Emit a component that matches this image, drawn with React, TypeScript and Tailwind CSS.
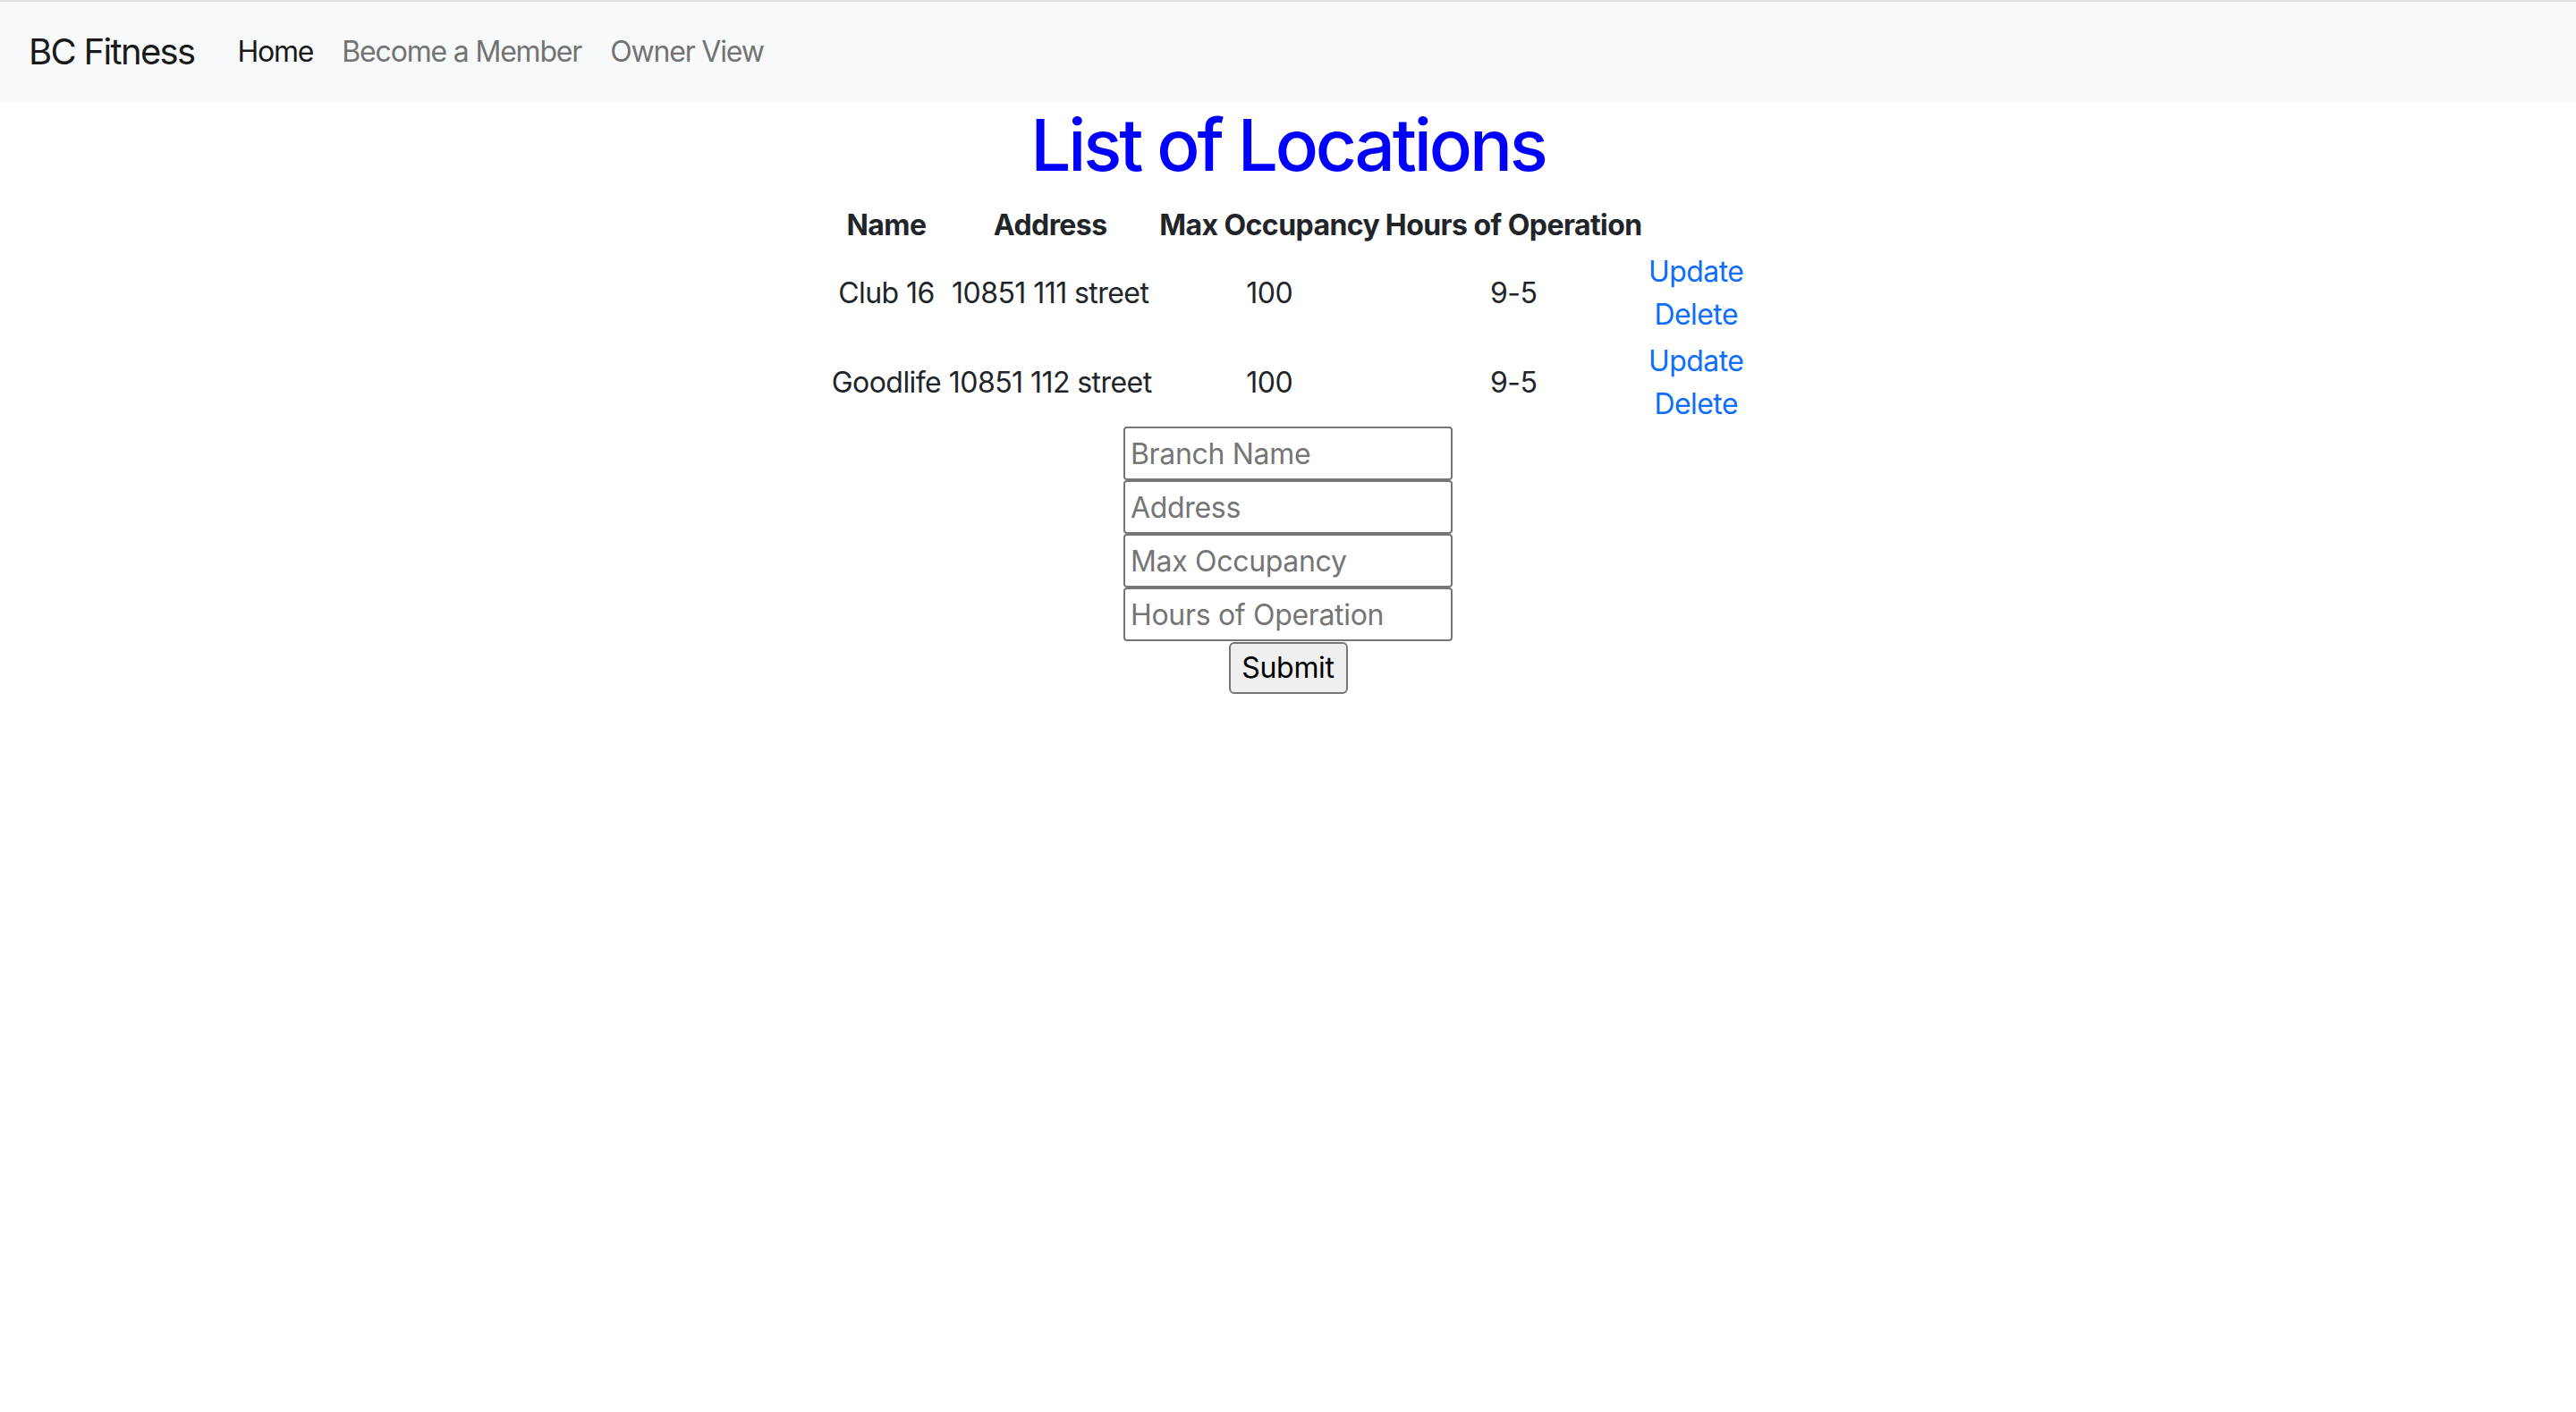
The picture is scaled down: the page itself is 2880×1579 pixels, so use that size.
const locations = [
  { name: "Club 16", address: "10851 111 street", max: "100", hours: "9-5" },
  { name: "Goodlife", address: "10851 112 street", max: "100", hours: "9-5" },
];

const fields = ["Branch Name", "Address", "Max Occupancy", "Hours of Operation"];

function NavBar() {
  return (
    <nav className="flex h-[113px] items-center border-t-2 border-[#dfe1e5] bg-[#f8f9fa] pl-[32px]">
      <a className="mr-[32px] text-[40px] leading-[60px] tracking-[-0.042em] text-[#1a1a1a]">BC Fitness</a>
      <ul className="flex text-[32px] leading-[48px] tracking-[-0.037em]">
        <li className="px-[16px] text-[#1a1a1a]">Home</li>
        <li className="px-[16px] text-[#737373]">Become a Member</li>
        <li className="px-[16px] text-[#737373]">Owner View</li>
      </ul>
    </nav>
  );
}

export default function App() {
  return (
    <div className="min-h-screen bg-white font-['Inter','Liberation_Sans',sans-serif] tracking-[-0.035em] text-[#212529]">
      <NavBar />
      <main className="pt-[1px] text-center">
        <h1 className="mb-[16px] text-[80px] font-medium leading-[96px] tracking-[-0.04em] text-[#0000ff]">
          List of Locations
        </h1>

        <table className="mx-auto border-collapse whitespace-nowrap text-[32px] leading-[48px]">
          <thead>
            <tr>
              <th className="w-[124px] p-[2px] font-bold">Name</th>
              <th className="w-[240px] p-[2px] font-bold">Address</th>
              <th className="w-[250px] p-[2px] font-bold">Max Occupancy</th>
              <th className="w-[296px] p-[2px] font-bold">Hours of Operation</th>
              <th className="w-[112px] p-[2px]"></th>
            </tr>
          </thead>
          <tbody>
            {locations.map((l) => (
              <tr key={l.name}>
                <td className="p-[2px] align-middle">{l.name}</td>
                <td className="p-[2px] align-middle">{l.address}</td>
                <td className="p-[2px] align-middle">{l.max}</td>
                <td className="p-[2px] align-middle">{l.hours}</td>
                <td className="p-[2px] align-middle text-[#0d6efd]">
                  <div>Update</div>
                  <div>Delete</div>
                </td>
              </tr>
            ))}
          </tbody>
        </table>

        <form className="-mt-[1px] flex flex-col items-center">
          {fields.map((f) => (
            <input
              key={f}
              placeholder={f}
              className="block h-[60px] w-[368px] rounded-[4px] border-2 border-[#767676] bg-white px-[6px] text-[32px] tracking-[-0.01em] text-black placeholder:text-[#757575]"
            />
          ))}
          <button
            type="button"
            className="mt-[1px] h-[58px] w-[133px] rounded-[6px] border-2 border-[#767676] bg-[#efefef] text-[32px] tracking-[-0.01em] text-black"
          >
            Submit
          </button>
        </form>
      </main>
    </div>
  );
}
